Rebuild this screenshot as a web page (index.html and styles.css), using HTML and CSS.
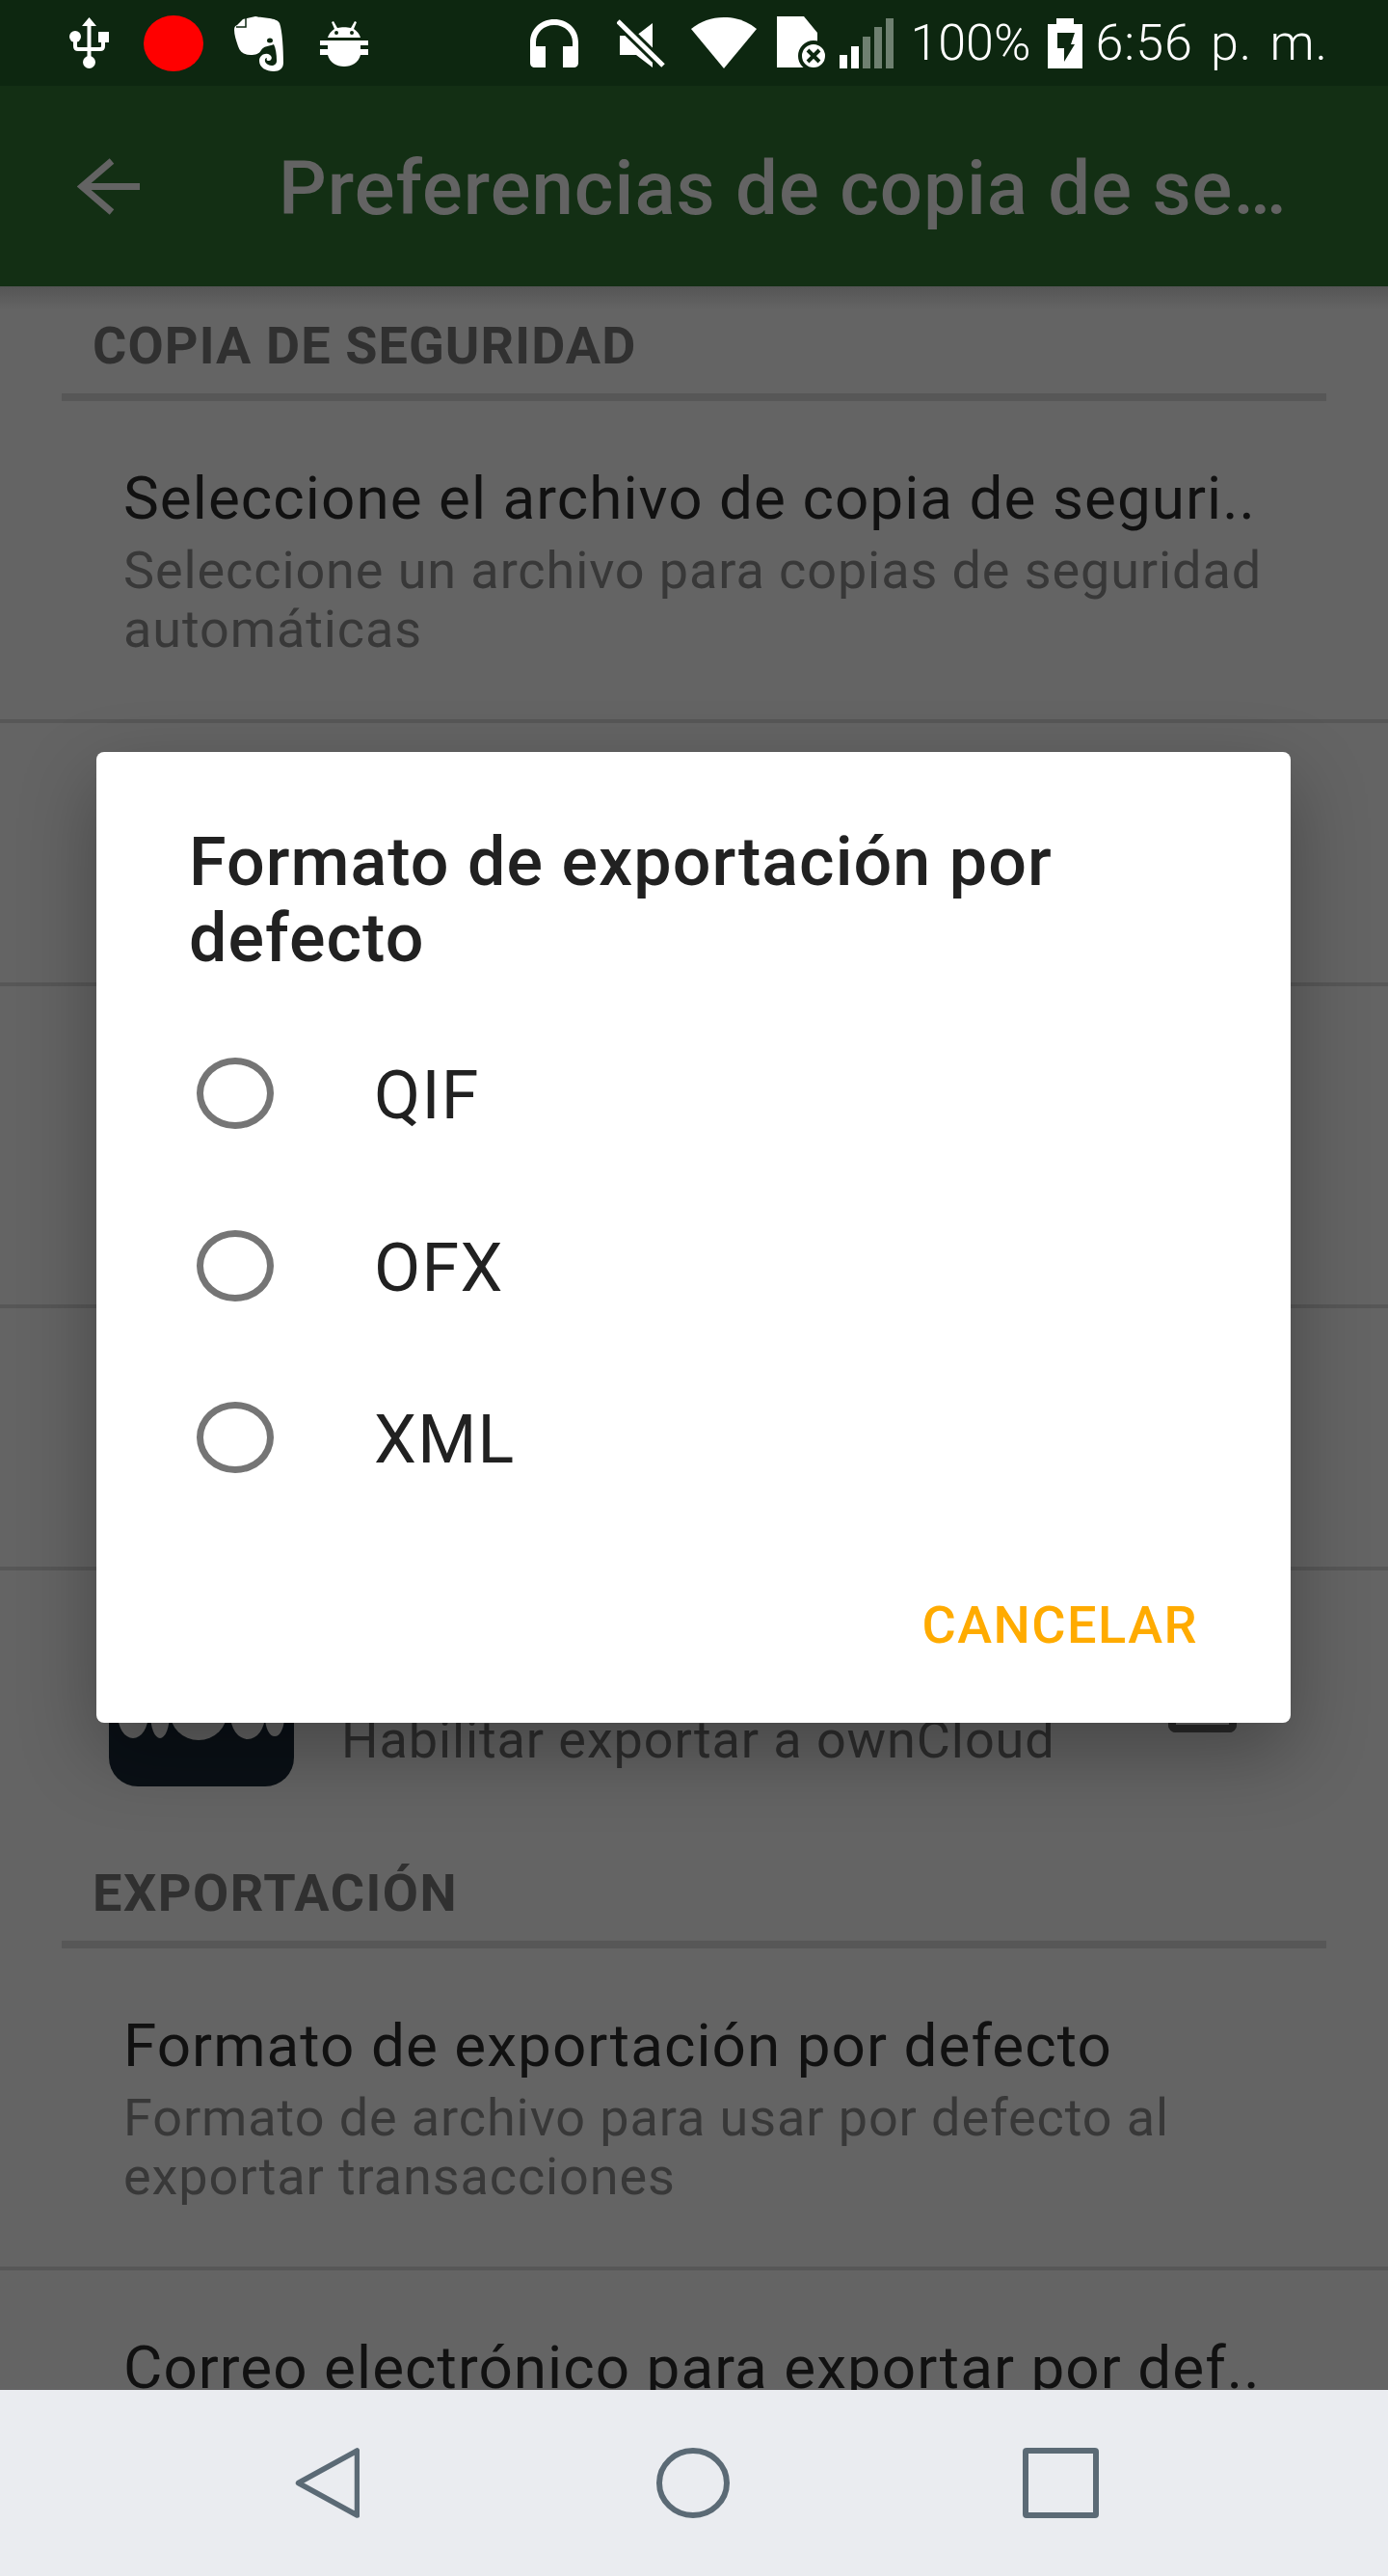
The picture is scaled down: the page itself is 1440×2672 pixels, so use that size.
FILE: index.html
```html
<!DOCTYPE html>
<html lang="es">
  <head>
    <title>Preferencias de copia de seguridad</title>
    <meta charset="utf-8" />
    <link rel="stylesheet" href="styles.css">
  </head>
  <body>
    <div class="phone">
      <div class="statusbar">
        <div class="status-left">
          <svg class="ic" width="41" height="53" viewBox="0 0 41 53"><g fill="#fff"><path d="M20.500 0l7.500 9h-5.500v32h-4V9H13z"/><circle cx="20.500" cy="46.500" r="6.500"/><circle cx="6" cy="20" r="6"/><rect x="30" y="15" width="11" height="11"/></g><path d="M6 22v8q0 3 3 3h23q3 0 3-3v-6" fill="none" stroke="#fff" stroke-width="4"/></svg>
          <span class="rec"></span>
          <svg class="ic ic-note" width="51" height="58" viewBox="0 0 51 58"><path fill="#fff" d="M9 4L22 1C30 3 44 2 47 8 50 16 51 36 51 49 51 55 47 58 41 58 33 58 26 54 26 47 26 41 33 38 37 41 40 43 39 47 36 47 34 47 33 46 34 44 31 44 31 49 35 51 39 53 44 52 44 47 44 40 43 34 41 30 36 32 30 32 28 36 26 40 22 41 17 41 10 41 6 38 4 32 2 26 0 20 0 15 0 12 1 11 3 10z"/><path d="M12 2v10H2" fill="none" stroke="#0d2710" stroke-width="1.500"/><ellipse cx="37" cy="26" rx="3" ry="2.500" fill="#0d2710"/></svg>
          <svg class="ic ic-droid" width="50" height="49" viewBox="0 0 50 49"><g fill="#fff"><path d="M8 19c1-4 4-7 7-9l-3-7 2-1 4 7c4-1 10-1 14 0l4-7 2 1-3 7c3 2 6 5 7 9z"/><rect x="0" y="22" width="50" height="5"/><rect x="0" y="31" width="50" height="6"/><rect x="8" y="22" width="34" height="15"/><path d="M8 37h34c-2 8-9 12-17 12S10 45 8 37z"/></g><circle cx="17" cy="14" r="2" fill="#0d2710"/><circle cx="33" cy="14" r="2" fill="#0d2710"/></svg>
        </div>
        <div class="status-right">
          <svg class="ic" width="50" height="50" viewBox="0 0 50 50"><path fill="#fff" d="M25 0C11 0 0 10 0 24v21c0 3 2 5 5 5h11V28H6v-4C6 14 14 6 25 6s19 8 19 18v4H34v22h11c3 0 5-2 5-5V24C50 10 39 0 25 0z"/></svg>
          <svg class="ic ic-mute" width="50" height="50" viewBox="0 0 50 50"><path fill="#fff" d="M3 17h17L37 4v46L20 37H3z"/><path d="M1 2l47 46" stroke="#0d2710" stroke-width="11" fill="none"/><path d="M1 2l47 46" stroke="#fff" stroke-width="5" fill="none"/></svg>
          <svg class="ic ic-wifi" width="68" height="53" viewBox="0 0 68 53"><path fill="#fff" d="M0 12C10 4 21 0 34 0s24 4 34 12L34 53z"/></svg>
          <svg class="ic ic-sd" width="51" height="55" viewBox="0 0 51 55"><path fill="#fff" d="M0 0h28l14 17v36H0z"/><circle cx="38" cy="41" r="14" fill="#fff" stroke="#0d2710" stroke-width="4"/><path d="M32 35l12 12M44 35L32 47" stroke="#0d2710" stroke-width="4" fill="none"/></svg>
          <div class="signal"><i class="b1"></i><i class="b2"></i><i class="b3"></i><i class="b4"></i><i class="b5"></i></div>
          <span class="pct">100%</span>
          <svg class="ic ic-batt" width="36" height="52" viewBox="0 0 36 52"><path fill="#fff" d="M9 0h18v6h9v46H0V6h9z"/><path fill="#0d2710" d="M10 15h18l-4 12h4L17 45V31h-7z"/></svg>
          <span class="clock">6:56 p. m.</span>
        </div>
      </div>

      <header class="appbar">
        <svg class="back" width="65" height="59" viewBox="0 0 65 59"><path d="M65 29.500H5M36 3L5 29.500 36 56" fill="none" stroke="#636363" stroke-width="7"/></svg>
        <h1 class="appbar-title">Preferencias de copia de se…</h1>
      </header>

      <main class="prefs">
        <h2 class="cat cat-first">COPIA DE SEGURIDAD</h2>
        <div class="cat-line"></div>
        <div class="pref pref-text">
          <div class="pref-title">Seleccione el archivo de copia de seguri..</div>
          <div class="pref-sub">Seleccione un archivo para copias de seguridad<br>automáticas</div>
        </div>
        <div class="pref pref-2"></div>
        <div class="pref pref-3"></div>
        <div class="pref pref-4"></div>
        <div class="pref-own">
          <div class="own-logo">
            <svg width="192" height="100" viewBox="0 0 192 100"><g fill="#636363"><ellipse cx="25" cy="25" rx="16" ry="25"/><ellipse cx="53" cy="25" rx="10" ry="25"/><ellipse cx="93" cy="22" rx="30" ry="30"/><ellipse cx="144" cy="26" rx="18" ry="25"/><ellipse cx="172" cy="28" rx="10" ry="20"/></g></svg>
          </div>
          <div class="own-sub">Habilitar exportar a ownCloud</div>
          <div class="own-check"></div>
        </div>
        <h2 class="cat cat-export">EXPORTACIÓN</h2>
        <div class="cat-line"></div>
        <div class="pref pref-text">
          <div class="pref-title">Formato de exportación por defecto</div>
          <div class="pref-sub">Formato de archivo para usar por defecto al<br>exportar transacciones</div>
        </div>
        <div class="pref-last">
          <div class="pref-title">Correo electrónico para exportar por def..</div>
        </div>
      </main>

      <div class="dialog">
        <h3 class="dialog-title">Formato de exportación por defecto</h3>
        <ul class="options">
          <li class="option"><span class="radio"></span>QIF</li>
          <li class="option"><span class="radio"></span>OFX</li>
          <li class="option"><span class="radio"></span>XML</li>
        </ul>
        <div class="dialog-actions"><span class="btn-cancel">CANCELAR</span></div>
      </div>

      <nav class="navbar">
        <svg width="67" height="73" viewBox="0 0 67 73"><path d="M64.500 3v67L3.500 36.500z" fill="none" stroke="#5b6a75" stroke-width="5.500" stroke-linejoin="round"/></svg>
        <svg class="nav-home" width="76" height="73" viewBox="0 0 76 73"><ellipse cx="38" cy="36.500" rx="35" ry="33.500" fill="none" stroke="#5b6a75" stroke-width="6"/></svg>
        <svg width="79" height="73" viewBox="0 0 79 73"><rect x="3" y="3" width="73" height="67" rx="1" fill="none" stroke="#5b6a75" stroke-width="6"/></svg>
      </nav>
    </div>
  </body>
</html>
```
FILE: styles.css
```css
* {
  box-sizing: border-box;
}
html, body {
  margin: 0;
  padding: 0;
}
.phone {
  width: 1440px;
  height: 2672px;
  position: relative;
  overflow: hidden;
  display: flex;
  flex-direction: column;
  background: #646464;
  font-family: Roboto, "Liberation Sans", sans-serif;
}

/* status bar */
.statusbar {
  height: 89px;
  flex: none;
  background: #0d2710;
  display: flex;
  justify-content: space-between;
  align-items: center;
  padding: 0 62px 0 72px;
  color: #fff;
}
.status-left, .status-right {
  display: flex;
  align-items: center;
}
.ic {
  display: block;
  flex: none;
}
.rec {
  width: 62px;
  height: 58px;
  margin-left: 36px;
  border-radius: 50%;
  background: #f00;
}
.ic-note { margin-left: 32px; }
.ic-droid { margin-left: 38px; }
.ic-mute { margin-left: 40px; }
.ic-wifi { margin-left: 27px; }
.ic-sd { margin-left: 21px; }
.ic-batt { margin-left: 18px; }
.signal {
  display: flex;
  align-items: flex-end;
  gap: 4px;
  height: 52px;
  margin-left: 14px;
}
.signal i {
  display: block;
  width: 8px;
  background: #fff;
}
.signal .b1 { height: 14px; }
.signal .b2 { height: 23px; }
.signal .b3, .signal .b4, .signal .b5 { background: #6e8070; }
.signal .b3 { height: 33px; }
.signal .b4 { height: 43px; }
.signal .b5 { height: 52px; }
.pct, .clock {
  font-size: 52px;
  font-weight: 300;
  white-space: nowrap;
}
.pct {
  margin-left: 17px;
}
.clock {
  margin-left: 13px;
  letter-spacing: 1px;
  word-spacing: 4.500px;
}

/* app bar */
.appbar {
  height: 208px;
  flex: none;
  background: #132f14;
  display: flex;
  align-items: center;
  padding-left: 80px;
  position: relative;
  z-index: 2;
}
.back {
  flex: none;
}
.appbar-title {
  margin: 4px 0 0 144px;
  font-size: 78px;
  font-weight: 500;
  letter-spacing: 1px;
  color: #636363;
  white-space: nowrap;
}

/* preference list */
.prefs {
  flex: 1;
  overflow: hidden;
  background: linear-gradient(#555, #646464 24px) no-repeat;
}
.cat {
  margin: 0;
  padding-left: 96px;
  font-size: 54px;
  font-weight: 700;
  letter-spacing: 1.100px;
  color: #303030;
  line-height: 64px;
}
.cat-first {
  padding-top: 30px;
}
.cat-export {
  margin-top: 79px;
  letter-spacing: 1.500px;
}
.cat-line {
  height: 8px;
  margin: 17px 64px 0;
  background: #575757;
}
.pref {
  border-bottom: 4px solid #575757;
}
.pref-text {
  height: 334px;
  padding: 65px 0 0 128px;
}
.pref-2 { height: 273px; }
.pref-3 { height: 334px; }
.pref-4 { height: 272px; }
.pref-title {
  font-size: 62px;
  line-height: 72px;
  letter-spacing: 1.050px;
  color: #111;
  white-space: nowrap;
}
.pref-sub, .own-sub {
  font-size: 54px;
  line-height: 61px;
  letter-spacing: 0.900px;
}
.pref-sub {
  margin-top: 8px;
  color: #383838;
}
.pref-last {
  padding: 65px 0 0 128px;
}
.pref-own {
  height: 224px;
  position: relative;
  padding-left: 113px;
  display: flex;
  align-items: flex-end;
}
.own-logo {
  width: 192px;
  height: 100px;
  background: #0a1016;
  border-radius: 0 0 30px 30px;
  overflow: hidden;
}
.own-logo svg {
  display: block;
}
.own-sub {
  color: #2e2e2e;
  margin: 0 0 18px 49px;
}
.own-check {
  position: absolute;
  right: 157px;
  top: 144px;
  width: 71px;
  height: 24px;
  border: 8px solid #2a2a2a;
  border-top: 0;
  border-radius: 0 0 8px 8px;
}

/* dialog over the list */
.dialog {
  position: absolute;
  left: 100px;
  top: 780px;
  width: 1239px;
  height: 1007px;
  background: #fff;
  border-radius: 8px;
  box-shadow: 0 30px 80px rgba(0, 0, 0, 0.3);
  padding: 75px 96px 0;
  display: flex;
  flex-direction: column;
}
.dialog-title {
  margin: 0;
  font-size: 70px;
  font-weight: 500;
  line-height: 79px;
  letter-spacing: 1.050px;
  color: #212121;
}
.options {
  list-style: none;
  margin: 32px 0 0;
  padding: 0;
}
.option {
  height: 178.500px;
  padding-top: 4px;
  display: flex;
  align-items: center;
  font-size: 70px;
  letter-spacing: 1.300px;
  color: #212121;
}
.radio {
  width: 80px;
  height: 74px;
  margin: 0 104px 4px 8px;
  border: 7px solid #757575;
  border-radius: 50%;
  flex: none;
}
.dialog-actions {
  margin-top: 73px;
  display: flex;
  justify-content: flex-end;
}
.btn-cancel {
  font-size: 54px;
  font-weight: 500;
  letter-spacing: 1.500px;
  color: #ffab00;
}

/* nav bar */
.navbar {
  height: 193px;
  flex: none;
  background: #eaecf0;
  display: flex;
  justify-content: center;
  align-items: center;
  gap: 306px;
  padding-left: 5px;
  position: relative;
  z-index: 3;
}
.nav-home {
  margin: 0 -2px 0 2px;
}
```
